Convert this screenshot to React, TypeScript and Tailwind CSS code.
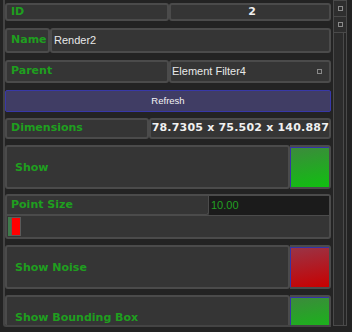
const label = "font-['DejaVu_Sans',sans-serif] font-bold text-[11px] text-[#1f9f1f]";
const value = "font-['Liberation_Sans',Arial,sans-serif] text-[11px] text-[#e8e8e8]";
const cell = "border-2 border-[#4b4b4b] rounded-[3px] bg-[#353535]";

function ToggleRow({ name, on }: { name: string; on: boolean }) {
  return (
    <div className="flex h-[44px] shrink-0">
      <div className={`${cell} flex flex-1 items-center pl-[8px] pt-[2px]`}>
        <span className={label}>{name}</span>
      </div>
      <div className="w-[41px] border-2 border-[#4b4b4b] border-l-0 rounded-r-[3px] bg-[#353535] p-0">
        <div
          className={`h-full w-full border-t border-l border-[#3434a8] ${
            on
              ? "bg-[linear-gradient(170deg,#3c8a3c_0%,#10c010_100%)]"
              : "bg-[linear-gradient(170deg,#9a3446_0%,#c80000_100%)]"
          }`}
        />
      </div>
    </div>
  );
}

export default function App() {
  return (
    <div className="flex h-[332px] w-[352px] overflow-hidden bg-[#232323]">
      <div className="ml-[3px] flex h-[327px] w-[328px] flex-col gap-[7px] overflow-hidden rounded-bl-[3px] border-b-2 border-l-2 border-[#444444] pl-[0px] pt-[3px]">
        <div className="flex h-[18px] shrink-0">
          <div className={`${cell} flex w-[164px] items-center pl-[4px]`}>
            <span className={label}>ID</span>
          </div>
          <div className={`${cell} flex flex-1 items-center justify-center pl-[4px]`}>
            <span className="font-['DejaVu_Sans',sans-serif] text-[11px] font-bold text-[#f0f0f0]">2</span>
          </div>
        </div>

        <div className="flex h-[25px] shrink-0">
          <div className={`${cell} flex w-[45px] items-center pl-[4px]`}>
            <span className={label}>Name</span>
          </div>
          <div className={`${cell} flex flex-1 items-center pl-[2px]`}>
            <span className={value}>Render2</span>
          </div>
        </div>

        <div className="flex h-[23px] shrink-0">
          <div className={`${cell} flex w-[164px] items-center pl-[4px]`}>
            <span className={label}>Parent</span>
          </div>
          <div className={`${cell} flex flex-1 items-center justify-between pl-[1px] pr-[7px]`}>
            <span className={value}>Element Filter4</span>
            <span className="h-[5px] w-[5px] border border-[#8a8a8a]" />
          </div>
        </div>

        <button className="flex h-[22px] shrink-0 items-center justify-center rounded-[2px] border border-[#3838a8] bg-[#403d64]">
          <span className="font-['Liberation_Sans',Arial,sans-serif] text-[9.5px] text-[#f4f4f4]">Refresh</span>
        </button>

        <div className="-mt-[1px] flex h-[21px] shrink-0">
          <div className={`${cell} flex w-[145px] items-center pl-[4px]`}>
            <span className={label}>Dimensions</span>
          </div>
          <div className={`${cell} flex flex-1 items-center pl-[1px]`}>
            <span className="font-['DejaVu_Sans',sans-serif] text-[11px] font-bold tracking-[0.2px] text-[#f0f0f0] whitespace-nowrap">
              78.7305 x 75.502 x 140.887
            </span>
          </div>
        </div>

        <div className="-mt-[1px]">
          <ToggleRow name="Show" on />
        </div>

        <div className="-mt-[2px] flex h-[45px] shrink-0 flex-col rounded-[3px] border-2 border-[#4b4b4b] bg-[#353535]">
          <div className="flex h-[19px]">
            <div className="flex w-[202px] items-end rounded-br-[3px] border-b border-r border-[#4b4b4b] pb-[1px] pl-[4px]">
              <span className={label}>Point Size</span>
            </div>
            <div className="flex flex-1 items-center bg-[#1b1b1b] pl-[2px]">
              <span className="font-['Liberation_Sans',Arial,sans-serif] text-[11px] text-[#22a022]">10.00</span>
            </div>
          </div>
          <div className="flex flex-1 border-t border-[#4b4b4b] py-[1px] pl-[1px]">
            <div className="w-[3px] bg-[#3f7a4c]" />
            <div className="w-[10px] border border-[#5a5a5a] bg-[#ff0000]" />
          </div>
        </div>

        <div className="-mt-[1px]">
          <ToggleRow name="Show Noise" on={false} />
        </div>
        <div className="-mt-[1px]">
          <ToggleRow name="Show Bounding Box" on />
        </div>
      </div>

      <div className="ml-[2px] flex h-[326px] w-[14px] flex-col border border-[#4a4a4a] bg-[#262626]">
        <div className="flex h-[16px] items-center justify-center border-b border-[#4a4a4a] bg-[#2e2e2e]">
          <span className="h-[5px] w-[5px] border border-[#8a8a8a]" />
        </div>
        <div className="flex h-[16px] items-center justify-center border-b border-[#4a4a4a] bg-[#2e2e2e]">
          <span className="h-[5px] w-[5px] border border-[#8a8a8a]" />
        </div>
        <div className="mr-[2px] flex-1 border-r border-[#4a4a4a] bg-[#2c2c2c]" />
      </div>
    </div>
  );
}
